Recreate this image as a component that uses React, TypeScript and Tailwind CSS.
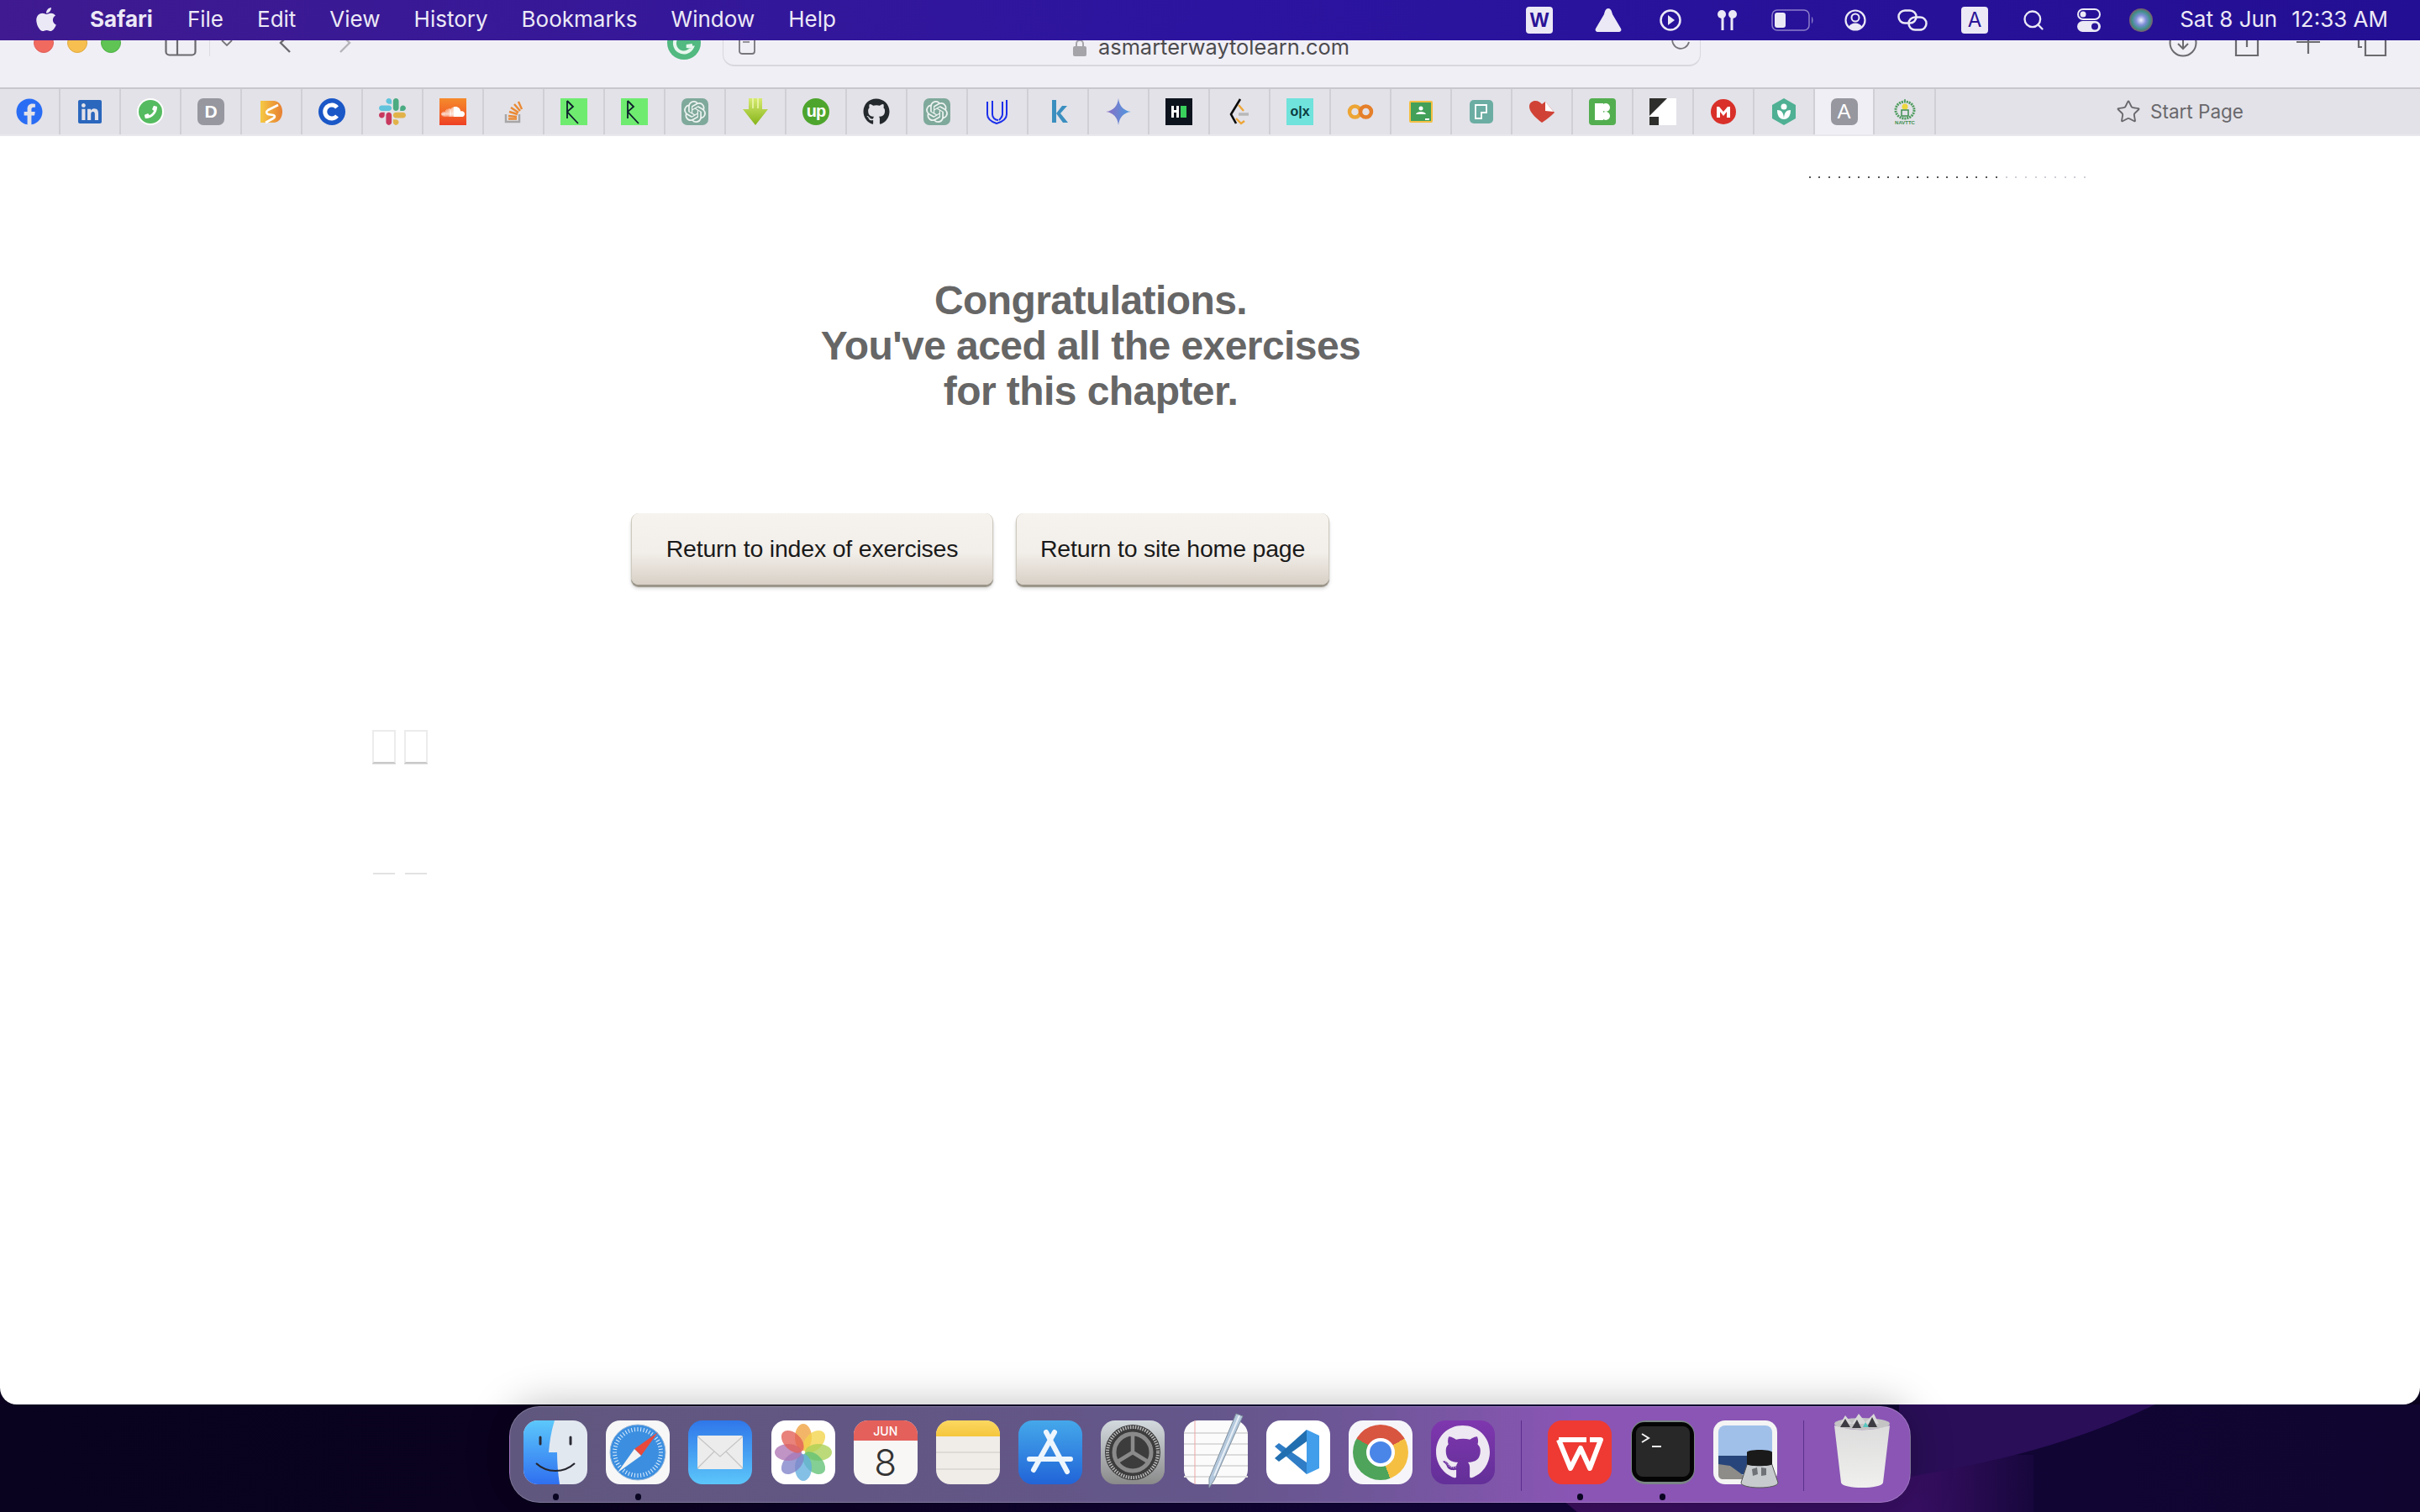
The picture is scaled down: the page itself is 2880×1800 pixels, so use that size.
import type { ReactNode } from "react"
import { FaApple, FaFacebook, FaGithub, FaLinkedin, FaPhoneAlt, FaSoundcloud } from "react-icons/fa"
import { SiOpenai } from "react-icons/si"
import { Search, Star } from "lucide-react"

const menuItems = ["File", "Edit", "View", "History", "Bookmarks", "Window", "Help"]

function Letter({ children, className }: { children: ReactNode; className: string }) {
    return <div className={`flex items-center justify-center font-['Liberation_Sans',sans-serif] ${className}`}>{children}</div>
}

function Slack() {
    return (
        <svg viewBox="0 0 123 123" className="h-8 w-8">
            <path fill="#c8395f" d="M25.8 77.6c0 7.1-5.8 12.9-12.9 12.9S0 84.7 0 77.6s5.8-12.9 12.9-12.9h12.9v12.9zm6.5 0c0-7.1 5.8-12.9 12.9-12.9s12.9 5.8 12.9 12.9v32.3c0 7.1-5.8 12.9-12.9 12.9s-12.9-5.8-12.9-12.9V77.6z" />
            <path fill="#62c3dc" d="M45.2 25.8c-7.1 0-12.9-5.8-12.9-12.9S38.1 0 45.2 0s12.9 5.8 12.9 12.9v12.9H45.2zm0 6.5c7.1 0 12.9 5.8 12.9 12.9s-5.8 12.9-12.9 12.9H12.9C5.8 58.1 0 52.3 0 45.2s5.8-12.9 12.9-12.9h32.3z" />
            <path fill="#4bab82" d="M97 45.2c0-7.1 5.8-12.9 12.9-12.9s12.9 5.8 12.9 12.9-5.8 12.9-12.9 12.9H97V45.2zm-6.5 0c0 7.1-5.8 12.9-12.9 12.9s-12.9-5.8-12.9-12.9V12.9C64.7 5.8 70.5 0 77.6 0s12.9 5.8 12.9 12.9v32.3z" />
            <path fill="#e2b24a" d="M77.6 97c7.1 0 12.9 5.8 12.9 12.9s-5.8 12.9-12.9 12.9-12.9-5.8-12.9-12.9V97h12.9zm0-6.5c-7.1 0-12.9-5.8-12.9-12.9s5.8-12.9 12.9-12.9h32.3c7.1 0 12.9 5.8 12.9 12.9s-5.8 12.9-12.9 12.9H77.6z" />
        </svg>
    )
}

function Svg32({ children }: { children: ReactNode }) {
    return <svg viewBox="0 0 32 32" className="h-8 w-8">{children}</svg>
}

function DataCamp() {
    return (
        <Svg32>
            <rect width="32" height="32" fill="#6fec70" />
            <path d="M8 3v21M8 3l7 7-7 6 13 14" fill="none" stroke="#0f1f2e" strokeWidth="1.800" />
        </Svg32>
    )
}

function Gpt() {
    return (
        <div className="flex h-8 w-8 items-center justify-center rounded-[7px] bg-[#7fa99b]">
            <SiOpenai className="h-[26px] w-[26px] text-[#edf3f0]" />
        </div>
    )
}

const favicons: ReactNode[] = [
    <FaFacebook className="h-8 w-8 text-[#2a6df5]" />,
    <FaLinkedin className="h-8 w-8 text-[#2b67bd]" />,
    <div className="flex h-8 w-8 items-center justify-center rounded-full bg-white">
        <div className="flex h-7 w-7 items-center justify-center rounded-full bg-[#55bb60]">
            <FaPhoneAlt className="h-[15px] w-[15px] -scale-x-100 text-white" />
        </div>
    </div>,
    <Letter className="h-8 w-8 rounded-[7px] bg-[#96979f] text-[21px] font-bold text-white">D</Letter>,
    <Svg32>
        <defs>
            <linearGradient id="sg" x1="0" x2="1">
                <stop offset="0" stopColor="#f6c944" />
                <stop offset="1" stopColor="#e77f32" />
            </linearGradient>
        </defs>
        <path d="M3 3h15c7 0 11 6 11 13s-4 13-11 13H3l0-2z" fill="url(#sg)" />
        <path d="M24 8l-12 6c-3 2-2 4 0 5l6 1c3 1 2 3 0 4l-9 5" fill="none" stroke="#fff" strokeWidth="2.600" />
    </Svg32>,
    <Svg32>
        <circle cx="16" cy="16" r="16" fill="#1a57c7" />
        <path d="M22 11a8 8 0 1 0 0 10" fill="none" stroke="#fff" strokeWidth="5" />
    </Svg32>,
    <Slack />,
    <div className="flex h-8 w-8 items-center justify-center bg-gradient-to-b from-[#f58a2c] to-[#ee3f24]">
        <FaSoundcloud className="h-7 w-7 text-white" />
    </div>,
    <Svg32>
        <path d="M7 19v9h16v-9" fill="none" stroke="#a8a6a6" strokeWidth="2.500" />
        <path d="M10 24.500h10M10 21l10 1M11 16l10 3M13 11l9 6M17 7l7 8M22 4l4 9" fill="none" stroke="#ea8a35" strokeWidth="2.400" />
    </Svg32>,
    <DataCamp />,
    <DataCamp />,
    <Gpt />,
    <Svg32>
        <defs>
            <linearGradient id="dl" x1="0" x2="0" y1="0" y2="1">
                <stop offset="0" stopColor="#d6ea70" />
                <stop offset="1" stopColor="#85b419" />
            </linearGradient>
        </defs>
        <path d="M8 0h16v13h7L16 32 1 13h7z" fill="url(#dl)" />
        <path d="M13 0v12M19 0v12" stroke="#eff7b5" strokeWidth="1.500" />
    </Svg32>,
    <Letter className="h-8 w-8 rounded-full bg-[#4ea52d] pb-[3px] text-[20px] font-bold tracking-[-1px] text-white">up</Letter>,
    <FaGithub className="h-8 w-8 text-[#24292e]" />,
    <Gpt />,
    <Svg32>
        <path d="M4 4v15c0 6 5 9 11 11 7-2 12-6 12-11V2" fill="none" stroke="#1c30ea" strokeWidth="2" />
        <path d="M10 3v16c0 4 3 7 7 7M22 4v15c0 3-2 5-4 7" fill="none" stroke="#1c30ea" strokeWidth="2" />
    </Svg32>,
    <Svg32>
        <path d="M9 2h5v27H9zM14 18l7-9h6l-8 9 9 11h-6z" fill="#3b8fc0" />
    </Svg32>,
    <Svg32>
        <defs>
            <linearGradient id="gm" x1="0" x2="1">
                <stop offset="0" stopColor="#8c6cc4" />
                <stop offset="1" stopColor="#4b9be0" />
            </linearGradient>
        </defs>
        <path d="M16 0c1 9 6 15 15 16-9 1-14 7-15 16-1-9-6-15-15-16 9-1 14-7 15-16z" fill="url(#gm)" />
    </Svg32>,
    <Svg32>
        <rect width="32" height="32" fill="#0e141e" />
        <path d="M7 9h3v5h3V9h3v14h-3v-6h-3v6H7z" fill="#fff" />
        <rect x="18" y="9" width="7" height="14" fill="#39d05c" />
    </Svg32>,
    <Svg32>
        <path d="M17 1L6 19l6 11" fill="none" stroke="#0b0b0b" strokeWidth="2.600" />
        <path d="M15 8l6 7M12 24l6 6 4-3" fill="none" stroke="#eea638" strokeWidth="2.400" />
        <path d="M15 19h12" stroke="#b9b8b8" strokeWidth="3.500" />
    </Svg32>,
    <Letter className="h-8 w-8 bg-[#6fe3dc] text-[16px] font-bold text-[#0c3b40]">o|x</Letter>,
    <Svg32>
        <circle cx="9.500" cy="16" r="6.500" fill="none" stroke="#eda534" strokeWidth="4.500" />
        <circle cx="22.500" cy="16" r="6.500" fill="none" stroke="#e57f2a" strokeWidth="4.500" />
    </Svg32>,
    <Svg32>
        <rect x="2" y="3" width="28" height="26" rx="2" fill="#f4bf42" />
        <rect x="4" y="5" width="24" height="22" fill="#42a058" />
        <circle cx="16" cy="12" r="2.500" fill="#fff" />
        <path d="M10 19c1-4 11-4 12 0z" fill="#fff" />
        <path d="M21 25h5" stroke="#fff" strokeWidth="2" />
    </Svg32>,
    <Svg32>
        <rect x="2" y="2" width="28" height="28" rx="5" fill="#6bada3" />
        <path d="M9 8h13v9h-6v7H9z" fill="none" stroke="#fff" strokeWidth="1.800" />
    </Svg32>,
    <Svg32>
        <path d="M16 29C8 23 1 16 1 10c0-5 4-7 7-7 4 0 6 2 8 4l4-3 11 13c-4 4-9 8-15 12z" fill="#d04236" />
        <path d="M20 4l10 12-10-1z" fill="#fff" />
    </Svg32>,
    <Svg32>
        <rect width="32" height="32" rx="4" fill="#53ae50" />
        <path d="M7 6h10v20H7z" fill="#fff" />
        <circle cx="20" cy="11" r="5" fill="#fff" />
        <circle cx="20" cy="21" r="5" fill="#fff" />
    </Svg32>,
    <Svg32>
        <rect width="32" height="32" fill="#fff" />
        <path d="M0 0h21L0 21zM0 22h11v10H0z" fill="#2e2e2c" />
    </Svg32>,
    <Svg32>
        <circle cx="16" cy="16" r="15" fill="#d9302a" />
        <path d="M8 23V10h3l5 6 5-6h3v13h-4v-7l-4 5-4-5v7z" fill="#fff" />
    </Svg32>,
    <Svg32>
        <path d="M16 0l14 8v16l-14 8-14-8V8z" fill="#4fb093" />
        <circle cx="16" cy="10" r="3.500" fill="#fff" />
        <path d="M8 14c5 0 8 3 8 11-5 0-8-4-8-11zM24 14c-5 0-8 3-8 11 5 0 8-4 8-11z" fill="#fff" />
    </Svg32>,
]

function Navttc() {
    return (
        <svg viewBox="0 0 32 32" className="h-8 w-8">
            <path d="M16 1v3" stroke="#4d9b5d" strokeWidth="1.500" />
            <ellipse cx="16" cy="14" rx="11" ry="10" fill="none" stroke="#4d9b5d" strokeWidth="3" strokeDasharray="2 1" />
            <circle cx="16" cy="10" r="3.500" fill="#ecd73c" />
            <path d="M12 14h8v7h-8z" fill="none" stroke="#3f8f50" strokeWidth="1.500" />
            <text x="16" y="31" textAnchor="middle" fontSize="6" fontWeight="700" fill="#3f8f50" fontFamily="Liberation Sans">NAVTTC</text>
        </svg>
    )
}

function MenuBar() {
    return (
        <header className="relative z-20 flex h-12 shrink-0 items-center bg-gradient-to-r from-[#3f1a90] via-[#2c14a0] to-[#230f93] pl-10 pr-[38px] font-[Inter,sans-serif] text-[26px] text-[#ece9f6]">
            <FaApple className="h-8 w-[30px] -translate-y-px" />
            <span className="ml-[37px] -translate-y-[2px] font-bold">Safari</span>
            <nav className="ml-[41px] flex -translate-y-[2px] gap-[40px]">
                {menuItems.map((item) => (
                    <span key={item}>{item}</span>
                ))}
            </nav>
            <div className="ml-auto flex items-center">
                <Letter className="h-8 w-8 rounded-[4px] bg-[#ece9f6] text-[24px] font-bold text-[#2a1497]">W</Letter>
                <svg viewBox="0 0 34 28" className="ml-[49px] h-7 w-[34px]">
                    <path d="M17 0C14 0 13 3 12 7L2 24c-1 2 0 4 3 4h24c3 0 4-2 3-4L22 7c-1-4-2-7-5-7z" fill="#ece9f6" />
                </svg>
                <svg viewBox="0 0 26 26" className="ml-[44px] h-[26px] w-[26px]">
                    <circle cx="13" cy="13" r="11.500" fill="none" stroke="#ece9f6" strokeWidth="2.500" />
                    <path d="M10 7l8 6-8 6z" fill="#ece9f6" />
                </svg>
                <svg viewBox="0 0 27 26" className="ml-[41px] h-[26px] w-[27px]">
                    <circle cx="7" cy="6" r="5" fill="#ece9f6" />
                    <circle cx="20" cy="6" r="5" fill="#ece9f6" />
                    <path d="M8 10v15M19 10v15" stroke="#ece9f6" strokeWidth="3" />
                </svg>
                <svg viewBox="0 0 51 26" className="ml-[39px] h-[26px] w-[51px]">
                    <rect x="1" y="1" width="44" height="24" rx="6" fill="none" stroke="#8d7fca" strokeWidth="1.500" />
                    <rect x="4" y="4" width="13" height="18" rx="3" fill="#ece9f6" />
                    <path d="M48 9c2 1 2 7 0 8z" fill="#8d7fca" />
                </svg>
                <svg viewBox="0 0 26 26" className="ml-[36px] h-[26px] w-[26px]">
                    <circle cx="13" cy="13" r="11.500" fill="none" stroke="#ece9f6" strokeWidth="2.200" />
                    <circle cx="13" cy="10" r="4.500" fill="none" stroke="#ece9f6" strokeWidth="2" />
                    <path d="M5 21c3-6 13-6 16 0l-8 4z" fill="#ece9f6" />
                </svg>
                <svg viewBox="0 0 36 26" className="ml-[37px] h-[26px] w-9">
                    <rect x="1.500" y="1.500" width="21" height="15" rx="7.500" fill="none" stroke="#ece9f6" strokeWidth="2.500" />
                    <rect x="13.500" y="9.500" width="21" height="15" rx="7.500" fill="none" stroke="#ece9f6" strokeWidth="2.500" />
                </svg>
                <div className="ml-10 flex h-8 w-8 items-center justify-center rounded-[4px] bg-[#ece9f6] text-[24px] text-[#2a1497]">A</div>
                <Search className="ml-10 h-[28px] w-[28px]" strokeWidth={2} />
                <svg viewBox="0 0 28 28" className="ml-[38px] h-7 w-7">
                    <rect x="1" y="1" width="26" height="12" rx="6" fill="none" stroke="#ece9f6" strokeWidth="2" />
                    <circle cx="7" cy="7" r="3.500" fill="#ece9f6" />
                    <rect x="0" y="15" width="28" height="13" rx="6.500" fill="#ece9f6" />
                    <circle cx="21" cy="21.500" r="4" fill="#2a1497" />
                </svg>
                <div className="ml-[34px] h-7 w-7 rounded-full bg-[radial-gradient(circle,#f4f4ff_0%,#7f8ed8_30%,#3f8f88_55%,#a03a58_80%,#44505e_100%)]" />
                <span className="ml-8 -translate-y-[2px]">Sat 8 Jun</span>
                <span className="ml-[17px] -translate-y-[2px]">12:33 AM</span>
            </div>
        </header>
    )
}

function Toolbar() {
    return (
        <div className="h-14 shrink-0 overflow-hidden bg-[#f1eff6]">
            <div className="-mt-[25px] flex h-14 items-center pl-10 pr-[39px]">
                <div className="flex gap-4">
                    <div className="h-6 w-6 rounded-full border border-[#e0605a] bg-[#f16a60]" />
                    <div className="h-6 w-6 rounded-full border border-[#e0a93f] bg-[#f6bf4f]" />
                    <div className="h-6 w-6 rounded-full border border-[#4fb045] bg-[#5fc454]" />
                </div>
                <svg viewBox="0 0 38 30" className="ml-[52px] mt-[2px] h-[30px] w-[38px]">
                    <rect x="1.500" y="1.500" width="35" height="27" rx="4" fill="none" stroke="#6b6a6e" strokeWidth="2.200" />
                    <path d="M15 1v28" stroke="#6b6a6e" strokeWidth="2.200" />
                </svg>
                <div className="ml-[15px] h-8 w-px bg-[#dddbe2]" />
                <svg viewBox="0 0 14 8" className="ml-[13px] h-2 w-[14px]">
                    <path d="M1 1l6 6 6-6" fill="none" stroke="#77767a" strokeWidth="1.800" />
                </svg>
                <svg viewBox="0 0 16 24" className="ml-[54px] h-6 w-4">
                    <path d="M14 1L3 12l11 11" fill="none" stroke="#6b6a6e" strokeWidth="2.400" />
                </svg>
                <svg viewBox="0 0 16 24" className="ml-14 h-6 w-4">
                    <path d="M2 1l11 11L2 23" fill="none" stroke="#b5b4b8" strokeWidth="2.400" />
                </svg>
                <svg viewBox="0 0 40 40" className="ml-[375px] h-10 w-10">
                    <circle cx="20" cy="20" r="20" fill="#52b980" />
                    <path d="M28 13a11 11 0 1 0 2 12l-7-1 7-1" fill="none" stroke="#e8f6ee" strokeWidth="4" />
                </svg>
                <div className="relative ml-[26px] flex h-14 w-[1164px] items-center justify-center gap-[13px] rounded-[14px] border-b-2 border-r border-l border-[#d9d7de] bg-[#f1eff6] pr-[2px] pt-[11px]">
                    <svg viewBox="0 0 20 28" className="absolute left-[18px] top-[14px] h-7 w-5">
                        <rect x="1" y="1" width="18" height="26" rx="3" fill="none" stroke="#77767a" strokeWidth="1.800" />
                        <path d="M5 8h8M5 13h8" stroke="#77767a" strokeWidth="1.500" />
                    </svg>
                    <svg viewBox="0 0 18 20" className="h-5 w-[18px] translate-y-[1px]">
                        <path d="M5 8V5a4 4 0 0 1 8 0v3" fill="none" stroke="#a5a4a8" strokeWidth="2" />
                        <rect x="1" y="8" width="16" height="12" rx="2" fill="#a5a4a8" />
                    </svg>
                    <span className="font-[Inter,sans-serif] text-[25.400px] leading-[24px] text-[#4c4b4e]">asmarterwaytolearn.com</span>
                    <svg viewBox="0 0 24 26" className="absolute right-[11px] top-[13px] h-[26px] w-6">
                        <path d="M17 3a10 10 0 1 0 5 11" fill="none" stroke="#77767a" strokeWidth="1.800" />
                    </svg>
                </div>
                <div className="ml-auto flex items-center text-[#6b6a6e]">
                    <svg viewBox="0 0 34 34" className="h-[34px] w-[34px]">
                        <circle cx="17" cy="17" r="15.500" fill="none" stroke="currentColor" strokeWidth="2" />
                        <path d="M17 9v15M11 18l6 6 6-6" fill="none" stroke="currentColor" strokeWidth="2" />
                    </svg>
                    <svg viewBox="0 0 30 34" className="ml-[44px] h-[34px] w-[30px]">
                        <path d="M9 10H2v22h26V10h-7M15 22V2" fill="none" stroke="currentColor" strokeWidth="2.200" />
                    </svg>
                    <svg viewBox="0 0 28 28" className="ml-[44px] h-7 w-7 -translate-y-px">
                        <path d="M14 0v28M0 14h28" stroke="currentColor" strokeWidth="2.200" />
                    </svg>
                    <svg viewBox="0 0 36 34" className="ml-[44px] h-[34px] w-9">
                        <path d="M6 22H2V4h22v4M10 10h24v22H10z" fill="none" stroke="currentColor" strokeWidth="2.200" />
                    </svg>
                </div>
            </div>
        </div>
    )
}

function TabBar() {
    return (
        <div className="flex h-[58px] shrink-0 border-t-2 border-b-2 border-t-[#c9c7cd] border-b-[#e9e8ec] bg-[#e3e2e8]">
            {favicons.map((icon, i) => (
                <div key={i} className="flex h-full w-[72px] items-center justify-center border-r-2 border-[#d0cfd5]">
                    {icon}
                </div>
            ))}
            <div className="flex h-full w-[71px] items-center justify-center border-r-2 border-[#d0cfd5] bg-[#f1eff6]">
                <Letter className="h-8 w-8 rounded-[7px] bg-[#96979f] text-[24px] text-white">A</Letter>
            </div>
            <div className="flex h-full w-[73px] items-center justify-center border-r-2 border-[#d0cfd5]">
                <Navttc />
            </div>
            <div className="flex flex-1 items-center justify-center gap-[11px] pl-[4px] font-[Inter,sans-serif] text-[22.500px] text-[#69686c]">
                <Star className="h-[30px] w-[30px]" strokeWidth={1.500} />
                <span>Start Page</span>
            </div>
        </div>
    )
}

function ProgressDots() {
    return (
        <div className="flex justify-end pr-[398px] pt-[48px]">
            <div className="flex gap-[9.700px]">
                {Array.from({ length: 29 }, (_, i) => (
                    <div key={i} className={i < 20 ? "h-[2px] w-[2px] bg-[#555555]" : "h-[2px] w-[2px] bg-[#cfcfd6]"} />
                ))}
            </div>
        </div>
    )
}

function PageButton({ label, width }: { label: string; width: string }) {
    return (
        <button className={`h-[85px] ${width} rounded-[9px] border-x border-[#cfcabf] bg-gradient-to-b from-[#f6f3ef] via-[#f2eee9] via-55% to-[#d8d0c6] text-[28.500px] tracking-[-0.2px] text-[#1a1a1a] shadow-[0_3px_1px_#9a9488,0_5px_4px_rgba(0,0,0,0.15)]`}>
            {label}
        </button>
    )
}

function EmptyFrame() {
    return <div className="h-10 w-7 border-2 border-[#ececec] border-b-[#c9c9c9] shadow-[0_1px_0_#dddddd]" />
}

function Page() {
    return (
        <main className="relative flex-1 rounded-b-[20px] bg-white font-['Liberation_Sans',sans-serif]">
            <ProgressDots />
            <h1 className="ml-[798px] mt-[119px] w-[1000px] text-center text-[48px] font-bold leading-[54px] tracking-[-0.57px] text-[#666666]">
                Congratulations.
                <br />
                You've aced all the exercises
                <br />
                for this chapter.
            </h1>
            <div className="ml-[751px] mt-[118px] flex gap-[27px]">
                <PageButton label="Return to index of exercises" width="w-[431px]" />
                <PageButton label="Return to site home page" width="w-[373px]" />
            </div>
            <div className="ml-[443px] mt-[173px] flex gap-[10px]">
                <EmptyFrame />
                <EmptyFrame />
            </div>
            <div className="ml-[444px] mt-[130px] flex gap-3">
                <div className="h-[2px] w-[26px] bg-[#e2e2e2]" />
                <div className="h-[2px] w-[26px] bg-[#e2e2e2]" />
            </div>
        </main>
    )
}

function AppIcon({ children, dot, className = "overflow-hidden" }: { children: ReactNode; dot?: boolean; className?: string }) {
    return (
        <div className="flex w-[76px] flex-col items-center">
            <div className={`h-[76px] w-[76px] rounded-[17px] ${className}`}>{children}</div>
            <div className={dot ? "mt-[11px] h-2 w-[7px] rounded-full bg-[#0a0622]" : "mt-[11px] h-2 w-[7px]"} />
        </div>
    )
}

function Svg76({ children }: { children: ReactNode }) {
    return <svg viewBox="0 0 76 76" className="h-[76px] w-[76px]">{children}</svg>
}

function Finder() {
    return (
        <Svg76>
            <defs>
                <linearGradient id="fb" x1="0" x2="0" y1="0" y2="1">
                    <stop offset="0" stopColor="#5cc8fb" />
                    <stop offset="1" stopColor="#2f6ff0" />
                </linearGradient>
            </defs>
            <rect width="76" height="76" fill="#e2e8f0" />
            <path d="M0 0h37c-4 13-6 25-7 38h10c0 12 1 25 3 38H0z" fill="url(#fb)" />
            <path d="M20 20v8M56 20v8" stroke="#2a2a35" strokeWidth="3" strokeLinecap="round" />
            <path d="M15 51c13 12 33 12 46 0" fill="none" stroke="#26262e" strokeWidth="2.200" />
        </Svg76>
    )
}

function Safari() {
    return (
        <Svg76>
            <rect width="76" height="76" fill="#f7f7f7" />
            <circle cx="38" cy="38" r="33" fill="#3c8fe0" stroke="#9ab8d8" />
            {Array.from({ length: 48 }, (_, i) => (
                <path key={i} d="M38 8v5" stroke="#dfeefc" strokeWidth="1" transform={`rotate(${i * 7.5} 38 38)`} />
            ))}
            <path d="M62 14L34 34l8 8z" fill="#e8493a" />
            <path d="M14 62l28-20-8-8z" fill="#f3f3f3" />
        </Svg76>
    )
}

function Mail() {
    return (
        <Svg76>
            <defs>
                <linearGradient id="ml" x1="0" x2="0" y1="0" y2="1">
                    <stop offset="0" stopColor="#2f77ea" />
                    <stop offset="1" stopColor="#5cc6fa" />
                </linearGradient>
            </defs>
            <rect width="76" height="76" fill="url(#ml)" />
            <rect x="11" y="18" width="54" height="40" rx="2" fill="#ececec" />
            <path d="M11 19l27 24 27-24M11 57l20-20M65 57L45 37" fill="none" stroke="#c4c4c4" strokeWidth="1.200" />
        </Svg76>
    )
}

const petals = ["#f0a13f", "#f2d44a", "#a9cf55", "#62c174", "#62aede", "#7f83c8", "#ae76b4", "#e25f55"]

function Photos() {
    return (
        <Svg76>
            <rect width="76" height="76" fill="#ffffff" />
            {petals.map((color, i) => (
                <ellipse key={color} cx="38" cy="20" rx="10" ry="16" fill={color} opacity="0.78" transform={`rotate(${i * 45} 38 38)`} />
            ))}
        </Svg76>
    )
}

function Calendar() {
    return (
        <div className="flex h-full flex-col bg-[#f8f7f5] font-[Inter,sans-serif]">
            <div className="flex h-[24px] items-center justify-center bg-[#e4605a] text-[14px] font-medium text-white">JUN</div>
            <div className="flex flex-1 items-center justify-center text-[44px] font-light leading-[52px] text-[#333333]">8</div>
        </div>
    )
}

function Notes() {
    return (
        <div className="flex h-full flex-col bg-[#f0ece7]">
            <div className="h-[19px] bg-gradient-to-b from-[#fbd860] to-[#f5c63c]" />
            <div className="mt-[18px] h-[2px] bg-[#dedad5]" />
            <div className="mt-[18px] h-[2px] bg-[#dedad5]" />
        </div>
    )
}

function AppStore() {
    return (
        <Svg76>
            <defs>
                <linearGradient id="as" x1="0" x2="0" y1="0" y2="1">
                    <stop offset="0" stopColor="#45a8ea" />
                    <stop offset="1" stopColor="#2164d8" />
                </linearGradient>
            </defs>
            <rect width="76" height="76" fill="url(#as)" />
            <path d="M33 14l25 47M43 14L18 59M13 46h49" stroke="#eef6fd" strokeWidth="6" strokeLinecap="round" />
        </Svg76>
    )
}

function SystemPrefs() {
    return (
        <Svg76>
            <defs>
                <linearGradient id="sp" x1="0" x2="0" y1="0" y2="1">
                    <stop offset="0" stopColor="#d3dade" />
                    <stop offset="1" stopColor="#8a8a8a" />
                </linearGradient>
            </defs>
            <rect width="76" height="76" fill="url(#sp)" />
            <circle cx="38" cy="38" r="33" fill="#3c3c3c" />
            <circle cx="38" cy="38" r="30" fill="none" stroke="#bbbbbb" strokeWidth="4" strokeDasharray="1.500 1.500" />
            <circle cx="38" cy="38" r="22" fill="none" stroke="#8a8a8a" strokeWidth="5" />
            <path d="M38 38V18M38 38L20 49M38 38l18 11" stroke="#8a8a8a" strokeWidth="4.500" />
        </Svg76>
    )
}

function TextEdit() {
    return (
        <svg viewBox="0 0 76 76" className="h-[76px] w-[76px] overflow-visible">
            <rect width="76" height="76" rx="17" fill="#fbfbfb" />
            <path d="M0 15h76M0 28h76M0 41h76M0 54h76M0 67h76" stroke="#dcdcdc" strokeWidth="2" />
            <path d="M13 0v76" stroke="#eda7a7" strokeWidth="1" />
            <path d="M62 -8l8 3-34 76-6 9 0-11z" fill="#b3c8dc" stroke="#7f8e9d" strokeWidth="1" />
            <path d="M66 -6L36 66" stroke="#e8eff6" strokeWidth="2" />
        </svg>
    )
}

function VsCode() {
    return (
        <Svg76>
            <rect width="76" height="76" fill="#ffffff" />
            <path d="M10 31l5-4 33 23v14z" fill="#2f7dc6" />
            <path d="M48 11v14L15 49l-5-4z" fill="#216fb0" />
            <path d="M48 11l15 7v39l-15 7z" fill="#429eea" />
        </Svg76>
    )
}

function Chrome() {
    return (
        <div className="flex h-full items-center justify-center bg-[#f6f6fa]">
            <div className="flex h-[66px] w-[66px] items-center justify-center rounded-full bg-[conic-gradient(from_-60deg,#d85540_0deg_120deg,#f5bf42_120deg_220deg,#4ea45a_220deg_360deg)]">
                <div className="h-[34px] w-[34px] rounded-full border-[4px] border-white bg-[#4a86e8]" />
            </div>
        </div>
    )
}

function GithubDesktop() {
    return (
        <div className="flex h-full items-center justify-center bg-gradient-to-b from-[#7f37ae] to-[#632f98]">
            <FaGithub className="h-[66px] w-[66px] text-[#eee8f2]" />
        </div>
    )
}

function Wps() {
    return (
        <Svg76>
            <rect width="76" height="76" fill="#ee3a33" />
            <path d="M13 23H46M13 23L27 57L39 33L50 57L63 23H50" fill="none" stroke="#ffffff" strokeWidth="6" strokeLinejoin="round" />
        </Svg76>
    )
}

function Terminal() {
    return (
        <Svg76>
            <rect width="76" height="76" rx="17" fill="#7a8585" />
            <rect x="1" y="2" width="74" height="71" rx="15" fill="#050505" />
            <rect x="6" y="7" width="64" height="60" rx="8" fill="#282828" />
            <path d="M13 16l8 5-8 5M25 31h11" fill="none" stroke="#f4f4f4" strokeWidth="2" />
        </Svg76>
    )
}

function Preview() {
    return (
        <svg viewBox="0 0 76 76" className="h-[76px] w-[76px] overflow-visible">
            <rect width="76" height="76" rx="14" fill="#f4f4f4" />
            <rect x="6" y="6" width="64" height="64" rx="8" fill="#a0c0ea" />
            <path d="M6 42h64v22H6z" fill="#27457a" />
            <path d="M6 52l14 2 22 16H12c-4 0-6-2-6-6z" fill="#8e8c88" />
            <path d="M41 50h28l8 24c0 8-44 8-44 0z" fill="#c8cbce" stroke="#555555" />
            <path d="M46 58l6-2 1 8-6 2zM57 56l6 1 0 8-6 1z" fill="#6f7276" />
            <path d="M40 38c0-4 30-4 30 0v14c0 3-30 3-30 0z" fill="#1a1a1a" />
        </svg>
    )
}

function Trash() {
    return (
        <svg viewBox="0 -8 76 88" className="-mt-2 h-[88px] w-[76px]">
            <defs>
                <linearGradient id="tr" x1="0" x2="0" y1="0" y2="1">
                    <stop offset="0" stopColor="#dcdcdc" />
                    <stop offset="1" stopColor="#f0f0ee" />
                </linearGradient>
            </defs>
            <ellipse cx="38" cy="4" rx="33" ry="7" fill="#c4c4c4" />
            <path d="M12 4l6-10 8 10 8-12 8 10 10-10 6 12z" fill="#d8d8d8" />
            <path d="M18 -2l6 10h-12zM32 -1l5 10H26zM50 -4l6 12H44z" fill="#3d3c42" />
            <path d="M42 2l4 6h-7z" fill="#58c7c0" />
            <path d="M5 6c22 7 44 7 66 0l-8 68c-2 8-48 8-50 0z" fill="url(#tr)" />
        </svg>
    )
}

function Dock() {
    return (
        <div className="relative z-10 flex h-[128px] shrink-0 justify-center pt-[2px]">
            <div className="flex h-[115px] w-[1668px] rounded-[36px] border border-[#ffffff33] bg-[linear-gradient(90deg,#60577e_0%,#64568a_50%,#70569a_62%,#8a55b5_76%,#8a55b5_100%)] px-[16px] pt-[16px] shadow-[0_0_50px_rgba(0,0,0,0.28)]">
                <div className="flex gap-[22.200px]">
                    <AppIcon dot><Finder /></AppIcon>
                    <AppIcon dot><Safari /></AppIcon>
                    <AppIcon><Mail /></AppIcon>
                    <AppIcon><Photos /></AppIcon>
                    <AppIcon><Calendar /></AppIcon>
                    <AppIcon><Notes /></AppIcon>
                    <AppIcon><AppStore /></AppIcon>
                    <AppIcon><SystemPrefs /></AppIcon>
                    <AppIcon className="overflow-visible"><TextEdit /></AppIcon>
                    <AppIcon><VsCode /></AppIcon>
                    <AppIcon><Chrome /></AppIcon>
                    <AppIcon><GithubDesktop /></AppIcon>
                    <div className="mx-[9px] h-[84px] w-px bg-[#5c2f8f]" />
                    <AppIcon dot><Wps /></AppIcon>
                    <AppIcon dot><Terminal /></AppIcon>
                    <AppIcon className="overflow-visible"><Preview /></AppIcon>
                    <div className="mx-[9px] h-[84px] w-px bg-[#5c2f8f]" />
                    <AppIcon className="overflow-visible"><Trash /></AppIcon>
                </div>
            </div>
        </div>
    )
}

function Wallpaper() {
    return (
        <svg viewBox="0 0 2880 128" className="absolute bottom-0 left-0 h-[128px] w-[2880px]">
            <defs>
                <linearGradient id="wall" x1="0" x2="1">
                    <stop offset="0" stopColor="#09031f" />
                    <stop offset="0.22" stopColor="#0a021e" />
                    <stop offset="0.6" stopColor="#12053c" />
                    <stop offset="1" stopColor="#10052f" />
                </linearGradient>
                <linearGradient id="under" x1="0" x2="1">
                    <stop offset="0" stopColor="#3c0f60" />
                    <stop offset="0.75" stopColor="#380f64" />
                    <stop offset="1" stopColor="#17073c" />
                </linearGradient>
            </defs>
            <rect width="2880" height="128" fill="url(#wall)" />
            <path d="M1855 110L1877 128H2420V60H2260V110z" fill="url(#under)" />
            <path d="M2260 88C2400 65 2480 40 2565 0H2260z" fill="#2a0e58" />
        </svg>
    )
}

export default function App() {
    return (
        <div className="relative flex h-[1800px] w-[2880px] flex-col overflow-hidden bg-[#0a021e]">
            <Wallpaper />
            <MenuBar />
            <div className="relative flex flex-1 flex-col">
                <Toolbar />
                <TabBar />
                <Page />
                <Dock />
            </div>
        </div>
    )
}
